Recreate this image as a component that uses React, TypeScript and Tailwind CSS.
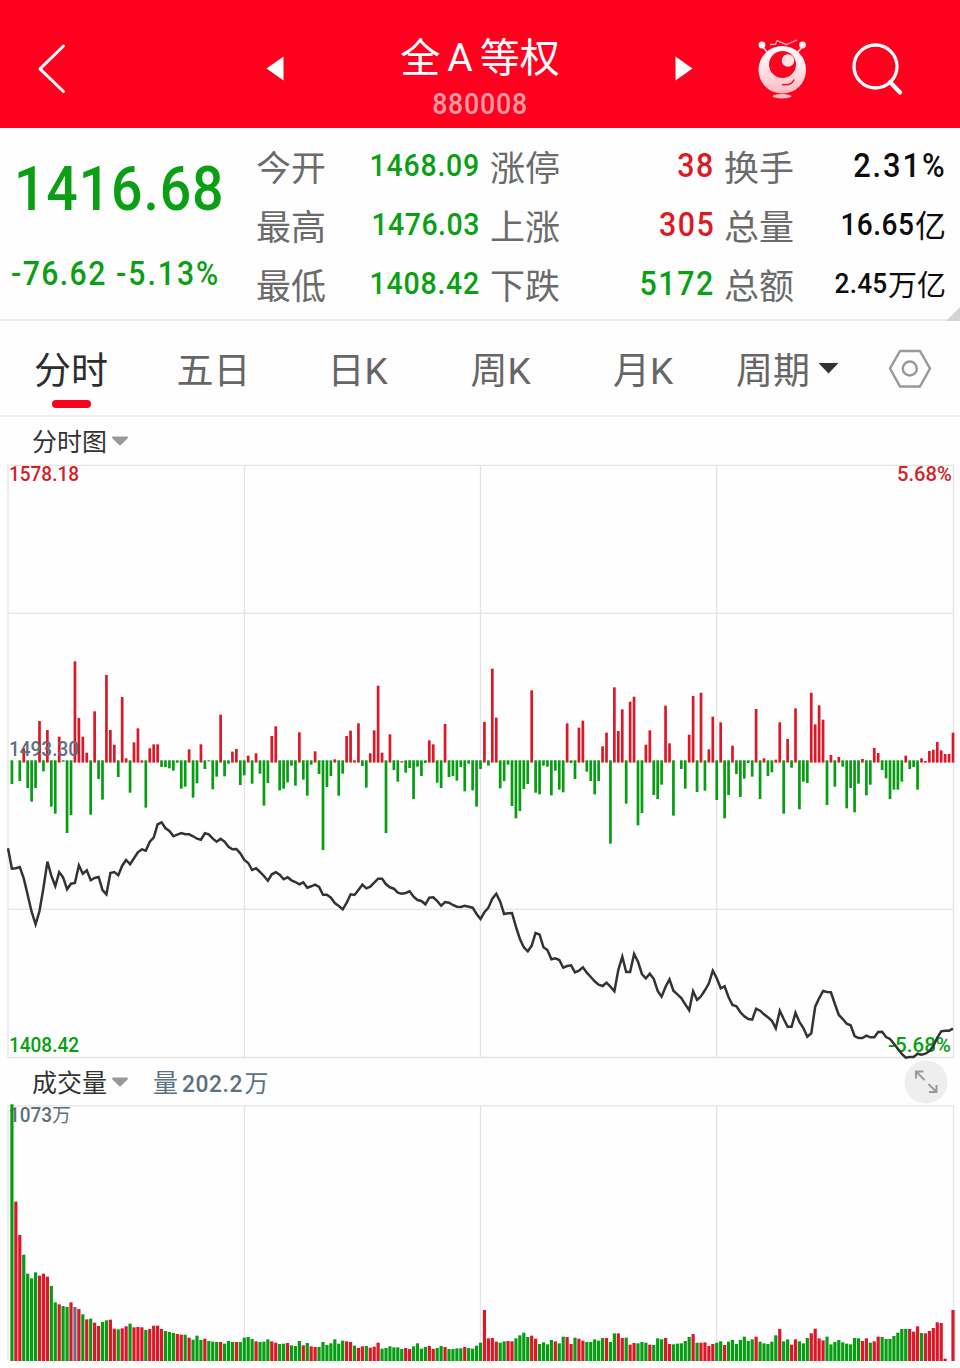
import React from "react";

const LATIN = "font-['Roboto','Noto_Sans_CJK_SC',sans-serif]";

/* One entry per minute pair. Positive = red, negative = green; unit is a third of a pixel. */
const MOMENTUM_AM = [
  -432, 0, -423, 325, -444, -485, -444, 243, -394, 270, -500, -521, 290, -365, -579, -525, 64, 234, 290, 338,
  -524, 214, -417, -479, 105, 270, 314, -411, 171, 355, -458, 307, 265, 361, -503, 325, 313, 313, -381, -381,
  -385, -392, -368, -446, -440, 328, -473, -430, 313, -387, -364, -448, -410, 224, -409, -371, 335, 327, -435, -406,
  347, -431, 340, -401, -497, -429, 288, 259, -451, -446, -427, -377, -437, 277, -419, -467, -374, 334, -402, -630,
  -441, -408, 358, -467, -401, 288, 272, 361, 250, -378, -443, 340, 271, 137, 338, -579, 283, -390, -425, 364,
  -398, -384, -477, -380, -408, -369, 301, 313, -428, -444, 252, -411, -408, -422, -381, -454, -371, -451, -500, -387,
];
const MOMENTUM_PM = [
  246, -377, 86, 233, -445, -423, -374, -498, -535, -513, -447, -432, 151, -458, -463, -377, -380, -466, -392, -449,
  -457, 250, -369, -417, 263, 242, -395, -423, -463, -423, 319, 278, -611, 142, 273, 208, -491, 185, 170, -556,
  -519, 314, 271, -465, -477, -434, 197, 310, -527, 0, -387, -446, 284, 168, -456, 158, -452, 328, 230, -480,
  247, -535, -465, 317, -402, -471, -416, -369, -410, 207, -477, 355, -408, -397, 359, 247, -521, 297, -383, 205,
  -508, -425, -429, 158, 253, 196, 239, -495, 345, -440, 351, -380, -505, -444, -517, -431, 357, -466, -434, 324,
  339, -390, -415, -477, -449, -449, -425, 347, -387, -381, -449, 355, 363, 333, 329, 306, 331, 342, 342, 278,
];
const MOMENTUM = [...MOMENTUM_AM, ...MOMENTUM_PM];

const PRICE = [
  625, 686, 685, 681, 716, 765, 815, 853, 813, 745, 665, 707, 738, 697, 712, 748, 731, 729, 676, 701,
  691, 721, 714, 711, 750, 763, 699, 696, 706, 677, 660, 673, 655, 637, 628, 632, 605, 593, 553, 547,
  565, 573, 589, 584, 579, 583, 583, 589, 596, 599, 580, 583, 596, 605, 596, 605, 620, 628, 627, 640,
  660, 669, 690, 685, 696, 708, 722, 703, 697, 704, 718, 712, 721, 726, 733, 727, 743, 739, 734, 741,
  764, 764, 773, 789, 798, 808, 789, 763, 765, 750, 734, 745, 740, 728, 716, 716, 733, 742, 746, 758,
  761, 759, 754, 770, 780, 783, 793, 773, 772, 783, 797, 786, 788, 795, 800, 801, 797, 800, 803, 822,
  837, 817, 803, 776, 761, 785, 822, 820, 819, 860, 897, 922, 934, 917, 879, 884, 922, 930, 958, 955,
  960, 983, 978, 976, 997, 992, 982, 998, 1011, 1024, 1034, 1038, 1028, 1040, 1054, 990, 950, 996, 996, 942,
  965, 1002, 1015, 1001, 1017, 1053, 1070, 1040, 1018, 1052, 1063, 1074, 1093, 1111, 1054, 1080, 1069, 1051, 1030, 992,
  1015, 1045, 1039, 1072, 1095, 1099, 1117, 1129, 1137, 1139, 1106, 1112, 1123, 1132, 1142, 1165, 1112, 1137, 1160, 1160,
  1118, 1146, 1164, 1190, 1180, 1100, 1075, 1053, 1056, 1057, 1092, 1125, 1137, 1151, 1156, 1188, 1194, 1194, 1187, 1192,
  1192, 1176, 1175, 1191, 1197, 1211, 1226, 1242, 1253, 1251, 1251, 1241, 1244, 1241, 1233, 1218, 1193, 1174, 1172, 1172, 1166,
];

/* Bar heights, same sign and unit convention. */
const VOLUME = [
  -770, 478, 378, -319, -262, -248, -266, 256, 262, 253, -225, -176, 170, -165, -162, 176, 162, 156, -140, 125,
  -127, 115, 105, -117, -122, 124, 97, -95, 98, 104, -112, 101, 102, 101, -93, 96, 106, 106, 96, -90,
  -87, -84, 81, 79, -79, 70, -64, -76, -63, 67, -60, -58, -57, 57, -52, -60, -57, 57, -57, -70,
  -72, -66, 59, -57, -58, -65, 59, 55, -51, -52, 54, -47, -45, -60, 47, -54, 44, 42, -42, -57,
  -48, -53, -65, -52, -61, 59, 57, -46, 39, 44, -45, 40, 43, 55, -37, -39, -44, -41, -41, -36,
  39, 36, -44, -53, -37, -42, 45, 36, -39, -45, 42, -36, -36, -38, -38, 42, -39, -37, -46, -55,
  153, 68, 69, 58, -55, -59, 60, 59, -68, -77, -85, -72, 76, 67, -51, -56, -50, -63, 59, -53,
  -73, 72, 51, -70, 67, 61, -57, -57, -65, -61, -69, 69, -57, -83, 83, 69, -70, 49, 54, -53,
  -57, -55, 49, -48, -68, -65, 69, 51, -50, -52, -53, -60, -72, 81, -55, 55, 56, 45, 51, -55,
  -59, 48, -58, -63, -51, -63, -73, -60, -65, 73, -58, -53, -51, -58, -77, 96, -59, -65, 49, 65,
  -59, -53, -69, 83, 97, 68, 62, -73, -50, -57, -63, -56, -52, -50, -69, -68, 60, 68, -55, 59,
  73, -72, -66, -66, -75, -85, -96, -96, 96, 88, 104, -84, 83, 90, 99, 116, 114, 7, 0, 153,
];

const STEP = 3.9375;
const RED = "#dc1828";
const GREEN = "#079d13";

function Robot() {
  return (
    <svg className="size-16 overflow-visible" viewBox="0 0 64 64" fill="none">
      <defs>
        <linearGradient id="body" x1="0" y1="0" x2="0" y2="1">
          <stop offset="0" stopColor="#fff" />
          <stop offset="0.5" stopColor="#ffe3e5" />
          <stop offset="1" stopColor="#ffb9c0" />
        </linearGradient>
      </defs>
      <path d="M12 12l6 7M53 12l-6 7" stroke="#ffe0e3" strokeWidth="1.6" />
      <circle cx="12" cy="11" r="3.4" fill="#fff" />
      <circle cx="52.500" cy="11" r="3.4" fill="#ffe9ea" />
      <path d="M20 10.500l5.500-0.300 1.500-3.600 9.500 4 10.500-4.600" stroke="#ffc0c6" strokeWidth="1.3" />
      <circle cx="32.300" cy="35.800" r="23.800" fill="url(#body)" />
      <circle cx="32.500" cy="30.500" r="13.500" fill="#fa0520" />
      <circle cx="38" cy="26.500" r="6.200" fill="#ffe4e6" />
      <path d="M32 50.500q10 1.500 12-5" stroke="#e8182e" strokeWidth="1.5" />
      <ellipse cx="32" cy="62.300" rx="9.500" ry="2.200" fill="#ffb9bf" />
    </svg>
  );
}

function Header() {
  return (
    <header className="flex h-[128px] shrink-0 items-start bg-[#ff001f] text-white">
      <svg className="ml-[36px] mt-[42px] h-[54px] w-[32px]" viewBox="0 0 32 54" fill="none" stroke="#fff" strokeWidth="3" strokeLinecap="round" strokeLinejoin="round">
        <path d="M27.500 4L4 26.800 27.500 49.500" />
      </svg>
      <svg className="ml-[198px] mt-[56px] h-[26px] w-[18px]" viewBox="0 0 18 26">
        <path d="M17.500 0.500V24.500L0.500 12.500z" fill="#fff" />
      </svg>
      <div className="ml-[66px] flex w-[260px] flex-col items-center">
        <h1 className="mt-[36px] flex h-[46px] items-center gap-[7px] whitespace-nowrap text-[40px] leading-[46px]">
          <span>全</span>
          <span className="relative -top-px text-[39px]">A</span>
          <span>等权</span>
        </h1>
        <div className="mt-[5px] scale-x-[0.92] pl-px text-[29px] font-medium leading-[34px] tracking-[0.900px] text-[#ff9ba5]">880008</div>
      </div>
      <svg className="ml-[65px] mt-[56px] h-[26px] w-[18px]" viewBox="0 0 18 26">
        <path d="M0.500 0.500V24.500L17.500 12.500z" fill="#fff" />
      </svg>
      <div className="ml-[57px] mt-[34px]">
        <Robot />
      </div>
      <svg className="ml-[37px] mt-[42px] h-[54px] w-[54px]" viewBox="0 0 54 54" fill="none" stroke="#fff" strokeWidth="3.300">
        <circle cx="24.500" cy="24.500" r="21.500" />
        <path d="M39 40l10 10.500" strokeWidth="4.200" strokeLinecap="round" />
      </svg>
    </header>
  );
}

const STATS = [
  [
    { label: "今开", value: "1468.09", unit: "", style: "text-[31px] tracking-[0.800px] text-[#0a9f14]", unitStyle: "" },
    { label: "最高", value: "1476.03", unit: "", style: "text-[31px] tracking-[0.500px] text-[#0a9f14]", unitStyle: "" },
    { label: "最低", value: "1408.42", unit: "", style: "text-[31px] tracking-[0.800px] text-[#0a9f14]", unitStyle: "" },
  ],
  [
    { label: "涨停", value: "38", unit: "", style: "text-[33px] tracking-[1.700px] text-[#dc1a24]", unitStyle: "" },
    { label: "上涨", value: "305", unit: "", style: "text-[33px] tracking-[1.700px] text-[#dc1a24]", unitStyle: "" },
    { label: "下跌", value: "5172", unit: "", style: "text-[33px] tracking-[1.700px] text-[#0a9f14]", unitStyle: "" },
  ],
  [
    { label: "换手", value: "2.31%", unit: "", style: "text-[33.500px] tracking-[2.100px] text-[#0c0c0c]", unitStyle: "" },
    { label: "总量", value: "16.65", unit: "亿", style: "text-[30.500px] tracking-[0.500px] text-[#0c0c0c]", unitStyle: "text-[31px] text-[#0c0c0c]" },
    { label: "总额", value: "2.45", unit: "万亿", style: "text-[28.500px] tracking-[0.200px] text-[#0c0c0c]", unitStyle: "text-[29px] text-[#0c0c0c]" },
  ],
];

const COLUMNS = ["w-[222px] mr-[12px]", "w-[223px] mr-[11px]", "w-[221px]"];

function Quote() {
  return (
    <section className="relative flex h-[193px] shrink-0 border-b-2 border-[#ececec]">
      <div className="w-[257px] text-[#0a9f14]">
        <div className="ml-[14px] mt-[25px] origin-left scale-x-[0.9] whitespace-nowrap text-[61.500px] font-medium leading-[72px] tracking-[1px]">1416.68</div>
        <div className="ml-[11px] mt-[31px] origin-left scale-x-[0.93] whitespace-nowrap text-[32.500px] font-medium leading-[36px] tracking-[1.500px]">
          <span>-76.62</span>
          <span className="ml-[10px] tracking-[2.100px]">-5.13%</span>
        </div>
      </div>
      {STATS.map((col, i) => (
        <div key={i} className={COLUMNS[i] + " pt-[9px]"}>
          {col.map((s) => (
            <div key={s.label} className="flex h-[59px] items-center whitespace-nowrap leading-[50px]">
              <span className="-ml-px mt-[7px] text-[35px] text-[#6b6b6b]">{s.label}</span>
              <span className={s.style + " -mr-px ml-auto origin-right scale-x-[0.92] pb-[2px] font-medium"}>{s.value}</span>
              {s.unit && <span className={s.unitStyle + " ml-[2px] mt-[3px]"}>{s.unit}</span>}
            </div>
          ))}
        </div>
      ))}
      <svg className="absolute -bottom-[2px] right-0 size-[14px]" viewBox="0 0 14 14">
        <path d="M14 0V14H0z" fill="#d4d4d4" />
      </svg>
    </section>
  );
}

function Tabs() {
  return (
    <nav className="grid h-[96px] shrink-0 grid-cols-[142px_143px_145px_141px_144px_145px_100px] items-center border-b-2 border-[#f0f0f0] text-[37px] leading-[48px] text-[#666]">
      <div className="relative pt-[8px] text-center text-[#2d2d2d]">
        分时
        <span className="absolute -bottom-[12px] left-[52px] h-[8px] w-[39px] rounded-full bg-[#f8001f]" />
      </div>
      <div className="pt-[8px] text-center">五日</div>
      <div className="pt-[8px] text-center">日K</div>
      <div className="pt-[8px] text-center">周K</div>
      <div className="pt-[8px] text-center">月K</div>
      <div className="flex items-center gap-[8px] pl-[21px]">
        <span className="pt-[8px]">周期</span>
        <svg className="h-[11px] w-[21px]" viewBox="0 0 21 11">
          <path d="M0.500 0H20.500L10.500 10.500z" fill="#333" />
        </svg>
      </div>
      <svg className="ml-[27px] mt-[2px] h-[42px] w-[46px]" viewBox="0 0 46 42" fill="none" stroke="#999" strokeWidth="2.500" strokeLinejoin="round">
        <path d="M13 3H33L43 20.500 33 38.500H13L3 20.500z" />
        <circle cx="22.800" cy="20.500" r="7" />
      </svg>
    </nav>
  );
}

function Caret() {
  return (
    <svg className="ml-[4px] h-[10px] w-[18px]" viewBox="0 0 18 10">
      <path d="M1.500 0.500H16.500Q17.500 1.500 16.500 2.500L10 9Q9 9.800 8 9L1.500 2.500Q0.500 1.500 1.500 0.500z" fill="#999" />
    </svg>
  );
}

function PriceChart() {
  const line = PRICE.map((v, i) => `${(8 + STEP * i).toFixed(1)},${(v / 3 + 176).toFixed(1)}`).join(" ");
  return (
    <svg className="h-[596px] w-[960px] shrink-0 overflow-visible" viewBox="0 0 960 596">
      <g stroke="#e4e4e4" strokeWidth="1.300" fill="none">
        <path d="M8 1.300H953.500V593.500H8z" />
        <path d="M8 149.300H953M8 445.300H953M244.400 1V593M480.500 1V593M716.700 1V593" />
        <path d="M8 297.300H953" strokeDasharray="4 4" />
      </g>
      <g fontSize="20" fontWeight="500">
        <text x="9" y="17" fill="#d21f29" textLength="70" lengthAdjust="spacingAndGlyphs">1578.18</text>
        <text x="897" y="17" fill="#d21f29" textLength="55" lengthAdjust="spacingAndGlyphs">5.68%</text>
        <text x="9" y="588" fill="#07a012" textLength="70" lengthAdjust="spacingAndGlyphs">1408.42</text>
        <text x="888" y="588" fill="#07a012" textLength="63" lengthAdjust="spacingAndGlyphs">-5.68%</text>
      </g>
      {MOMENTUM.map((v, i) => {
        if (v === 0) return null;
        const end = Math.abs(v) / 3 + 176;
        const top = v > 0 ? end : 296.3;
        const bottom = v > 0 ? 298.6 : end;
        return <rect key={i} x={8 + STEP * (i + 1) - 1.35} y={top} width="2.700" height={Math.max(0.6, bottom - top)} fill={v > 0 ? RED : GREEN} />;
      })}
      <text x="9" y="292" fontSize="20" fontWeight="500" fill="#5c7080" textLength="70" lengthAdjust="spacingAndGlyphs">1493.30</text>
      <polyline points={line} fill="none" stroke="#333" strokeWidth="2.500" strokeLinejoin="miter" />
    </svg>
  );
}

function VolumeChart() {
  return (
    <svg className="h-[264px] w-[960px] shrink-0" viewBox="0 0 960 264">
      <path d="M8 257V1.800H953.500V257M244.400 2V257M480.500 2V257M716.700 2V257" stroke="#e4e4e4" strokeWidth="1.300" fill="none" />
      <text x="9" y="17.500" fontSize="19.500" fill="#5c7080" textLength="62" lengthAdjust="spacingAndGlyphs">
        <tspan fontWeight="500">1073</tspan>万
      </text>
      {VOLUME.map((v, i) => (
        <rect key={i} x={8 + STEP * (i + 1) - 1.600} y={257 - Math.abs(v) / 3} width="3.200" height={Math.abs(v) / 3} fill={i === 16 ? "#6d6a8a" : v > 0 ? RED : GREEN} />
      ))}
    </svg>
  );
}

export default function App() {
  return (
    <main className={"flex h-[1368px] w-[960px] flex-col overflow-hidden bg-[#fefefe] " + LATIN}>
      <Header />
      <Quote />
      <Tabs />
      <div className="flex h-[47px] shrink-0 items-center pl-[32px] text-[25px] leading-[36px] text-[#333]">
        <span className="pt-[4px]">分时图</span>
        <Caret />
      </div>
      <PriceChart />
      <div className="flex h-[44px] shrink-0 items-center pl-[32px] pr-[12px] text-[25px] leading-[36px] text-[#333]">
        <span className="pt-[4px]">成交量</span>
        <Caret />
        <span className="ml-[24px] flex pt-[4px] text-[#5c7080]">
          <span>量</span>
          <span className="ml-[4px] origin-left scale-x-[0.93] text-[24.500px] font-medium tracking-[0.600px]">202.2</span>
          <span className="-ml-[3px] text-[24px]">万</span>
        </span>
        <svg className="ml-auto size-[44px]" viewBox="0 0 44 44" fill="none">
          <circle cx="22" cy="22" r="21.500" fill="#eee" />
          <path d="M12 18.500V11.500H19.500M12 11.500L20.500 20M32.500 25V32H25M32.500 32L24.500 24" stroke="#999" strokeWidth="2" />
        </svg>
      </div>
      <VolumeChart />
    </main>
  );
}
